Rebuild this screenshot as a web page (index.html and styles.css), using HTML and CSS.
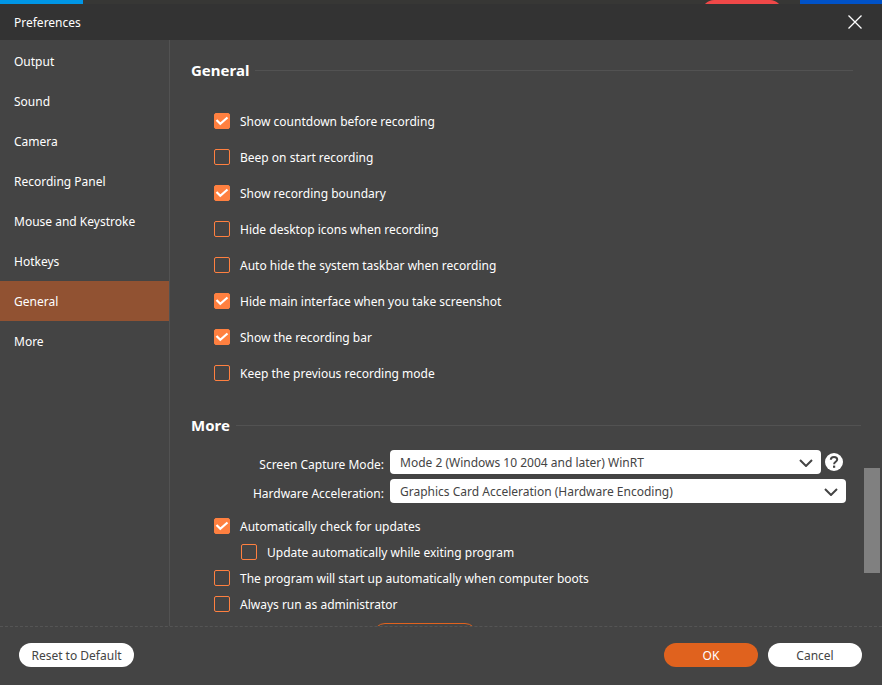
FILE: index.html
```html
<!DOCTYPE html>
<html lang="en">
<head>
  <meta charset="UTF-8">
  <meta name="viewport" content="width=device-width, initial-scale=1.0">
  <title>Preferences</title>
  <link rel="stylesheet" href="styles.css">
</head>
<body>

  <div class="backdrop">
    <span class="backdrop-left"></span>
    <span class="backdrop-record"></span>
    <span class="backdrop-right"></span>
  </div>

  <header class="titlebar">
    <span class="title">Preferences</span>
    <button class="close-button" aria-label="Close">
      <svg width="14" height="14" viewBox="0 0 14 14"><path d="M0.5 0.5L13.5 13.5M13.5 0.5L0.5 13.5" stroke="#fff" stroke-width="1.3" fill="none"/></svg>
    </button>
  </header>

  <div class="window">
    <nav class="sidebar">
      <a href="#output">Output</a>
      <a href="#sound">Sound</a>
      <a href="#camera">Camera</a>
      <a href="#panel">Recording Panel</a>
      <a href="#mouse">Mouse and Keystroke</a>
      <a href="#hotkeys">Hotkeys</a>
      <a href="#general" class="active">General</a>
      <a href="#more">More</a>
    </nav>

    <main class="content">
      <section class="general">
        <h2>General</h2>
        <div class="options">
          <label><input type="checkbox" checked><span>Show countdown before recording</span></label>
          <label><input type="checkbox"><span>Beep on start recording</span></label>
          <label><input type="checkbox" checked><span>Show recording boundary</span></label>
          <label><input type="checkbox"><span>Hide desktop icons when recording</span></label>
          <label><input type="checkbox"><span>Auto hide the system taskbar when recording</span></label>
          <label><input type="checkbox" checked><span>Hide main interface when you take screenshot</span></label>
          <label><input type="checkbox" checked><span>Show the recording bar</span></label>
          <label><input type="checkbox"><span>Keep the previous recording mode</span></label>
        </div>
      </section>

      <section class="more">
        <h2>More</h2>
        <div class="field">
          <label for="captureMode">Screen Capture Mode:</label>
          <div class="select-box">
            <select id="captureMode">
              <option>Mode 2 (Windows 10 2004 and later) WinRT</option>
            </select>
            <svg class="arrow" width="14" height="8" viewBox="0 0 14 8"><path d="M1 1L7 7L13 1" stroke="#444" stroke-width="2" fill="none"/></svg>
          </div>
          <button class="help-button" aria-label="Help">
            <svg width="18" height="18" viewBox="0 0 18 18">
              <circle cx="9" cy="9" r="9" fill="#fff"/>
              <path d="M5.8 6.8C5.8 4.8 7.2 3.9 9 3.9C10.8 3.9 12.2 4.9 12.2 6.6C12.2 8.8 9.1 8.8 9.1 11.2" stroke="#444" stroke-width="2" fill="none"/>
              <rect x="8" y="12.6" width="2.2" height="2.2" fill="#444"/>
            </svg>
          </button>
        </div>
        <div class="field">
          <label for="hardware">Hardware Acceleration:</label>
          <div class="select-box">
            <select id="hardware">
              <option>Graphics Card Acceleration (Hardware Encoding)</option>
            </select>
            <svg class="arrow" width="14" height="8" viewBox="0 0 14 8"><path d="M1 1L7 7L13 1" stroke="#444" stroke-width="2" fill="none"/></svg>
          </div>
        </div>
        <div class="options compact">
          <label><input type="checkbox" checked><span>Automatically check for updates</span></label>
          <label class="nested"><input type="checkbox"><span>Update automatically while exiting program</span></label>
          <label><input type="checkbox"><span>The program will start up automatically when computer boots</span></label>
          <label><input type="checkbox"><span>Always run as administrator</span></label>
        </div>
        <button class="outline-button" aria-label="More settings"></button>
      </section>
    </main>

    <div class="scrollbar"><span class="thumb"></span></div>
  </div>

  <footer class="footer">
    <button class="reset-button">Reset to Default</button>
    <button class="ok-button">OK</button>
    <button class="cancel-button">Cancel</button>
  </footer>

</body>
</html>
```
FILE: styles.css
```css
* {
  box-sizing: border-box;
}

body {
  margin: 0;
  height: 100vh;
  display: flex;
  flex-direction: column;
  overflow: hidden;
  background-color: #444;
  color: white;
  font-family: "Noto Sans", "Open Sans", sans-serif;
  font-size: 12px;
  line-height: 16px;
}

button, select {
  font: inherit;
  border: none;
  cursor: pointer;
}

/* strip of the main window above the dialog */
.backdrop {
  display: flex;
  flex: none;
  height: 4px;
  overflow: hidden;
  background-color: #373735;
}

.backdrop-left {
  width: 83px;
  background-color: #0096e6;
}

.backdrop-record {
  width: 80px;
  height: 40px;
  margin-left: auto;
  margin-right: 18px;
  border-radius: 12px;
  background-color: #f04848;
}

.backdrop-right {
  width: 82px;
  background-color: #0052c8;
}

.titlebar {
  display: flex;
  flex: none;
  align-items: center;
  justify-content: space-between;
  height: 36px;
  padding: 0 20px 0 14px;
  background-color: #333;
}

.title, .options span {
  padding-top: 2px;
}

.close-button {
  display: flex;
  padding: 0;
  background: none;
}

.window {
  display: flex;
  flex: 1;
  min-height: 0;
}

.sidebar {
  flex: none;
  width: 170px;
  padding-top: 1px;
  border-right: 1px solid #525252;
}

.sidebar a {
  display: block;
  height: 40px;
  padding-left: 14px;
  line-height: 42px;
  color: white;
  text-decoration: none;
}

.sidebar .active {
  background-color: #915232;
}

.content {
  flex: 1;
  overflow: hidden;
  padding: 20px 3px 0 21px;
}

h2 {
  display: flex;
  align-items: center;
  gap: 6px;
  margin: 0;
  font-size: 15px;
  line-height: 20px;
}

h2::after {
  content: "";
  flex: 1;
  height: 1px;
  background-color: #525252;
}

.general h2 {
  padding-right: 8px;
}

.options {
  display: flex;
  flex-direction: column;
  align-items: flex-start;
  padding: 23px 0 0 23px;
}

.options label {
  display: flex;
  align-items: center;
  gap: 10px;
  height: 36px;
}

.options input {
  appearance: none;
  width: 16px;
  height: 16px;
  margin: 0;
  border: 1px solid #ff8040;
  border-radius: 2px;
}

.options input:checked {
  background: #ff8040 url("data:image/svg+xml,%3Csvg xmlns='http://www.w3.org/2000/svg' viewBox='0 0 14 14'%3E%3Cpath d='M1.5 6L5.3 9.8L12.5 3.5' fill='none' stroke='white' stroke-width='2.2'/%3E%3C/svg%3E") center / 14px no-repeat;
}

.more {
  padding-top: 24px;
}

.more h2 {
  margin-bottom: 15px;
}

.field {
  display: flex;
  align-items: center;
  height: 24px;
  margin-bottom: 5px;
  padding-right: 15px;
}

.field label {
  width: 193px;
  margin-right: 6px;
  padding-top: 6px;
  text-align: right;
}

.select-box {
  position: relative;
  flex: 1;
}

.select-box select {
  appearance: none;
  display: block;
  width: 100%;
  height: 24px;
  padding: 2px 30px 0 10px;
  border-radius: 4px;
  background-color: white;
  color: #444;
}

.arrow {
  position: absolute;
  top: 9px;
  right: 8px;
  pointer-events: none;
}

.help-button {
  display: flex;
  margin: 0 3px 0 4px;
  padding: 0;
  background: none;
}

.compact {
  padding-top: 5px;
}

.compact label {
  height: 26px;
}

.compact .nested {
  margin-left: 27px;
}

.outline-button {
  display: block;
  width: 104px;
  height: 24px;
  margin: 6px 0 0 182px;
  border: 1px solid #e0621e;
  border-radius: 12px;
  background: none;
}

.scrollbar {
  position: relative;
  flex: none;
  width: 18px;
}

.thumb {
  position: absolute;
  top: 73%;
  left: 0;
  width: 16px;
  height: 18%;
  background-color: #808080;
}

.footer {
  display: flex;
  flex: none;
  gap: 10px;
  height: 59px;
  padding: 16px 20px 0 19px;
  border-top: 1px dashed #555;
}

.footer button {
  width: 94px;
  height: 24px;
  padding: 2px 0 0;
  border-radius: 12px;
  background-color: white;
  color: #444;
}

.footer .reset-button {
  width: 115px;
  margin-right: auto;
}

.footer .ok-button {
  background-color: #e0621e;
  color: white;
}
```
